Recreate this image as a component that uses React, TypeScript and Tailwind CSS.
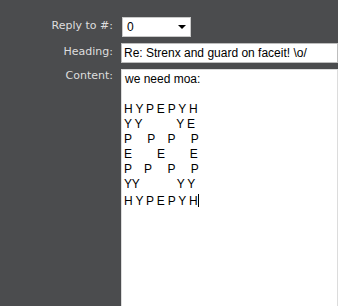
import React from 'react';

const rows = [
  'we need moa:',
  '',
  'H Y P E P Y H',
  'Y Y           Y E',
  'P     P    P     P',
  'E        E        E',
  'P    P     P     P',
  'YY            Y Y',
];

export default function App() {
  return (
    <div className="h-[306px] w-[338px] overflow-hidden bg-[#4b4c4e] pt-[17px]">
      <div className="grid grid-cols-[113px_1fr] gap-x-2 gap-y-[6px] grid-rows-[20px_20px_260px]">
        {/* Reply to */}
        <div className="text-right font-['DejaVu_Sans',sans-serif] text-[11px] leading-[18px] text-[#dedede]">Reply to #:</div>
        <div className="ml-px flex h-5 w-[69px] items-center justify-between border border-[#c9c9c9] bg-white pl-1 pr-[4px] font-['Liberation_Sans',Arial,sans-serif] text-[12px] text-black">
          <span>0</span>
          <svg viewBox="0 0 8 4" className="h-1 w-2">
            <path d="M0 0h8L4 4z" fill="#000" />
          </svg>
        </div>

        {/* Heading */}
        <div className="text-right font-['DejaVu_Sans',sans-serif] text-[11px] leading-[18px] text-[#dedede]">Heading:</div>
        <input
          readOnly
          value="Re: Strenx and guard on faceit! \o/"
          className="h-5 w-full border border-[#bdbdbd] bg-white px-[2px] font-['Liberation_Sans',Arial,sans-serif] text-[12px] text-black outline-none"
        />

        {/* Content */}
        <div className="text-right font-['DejaVu_Sans',sans-serif] text-[11px] leading-[14px] text-[#dedede]">Content:</div>
        <div className="border border-[#dcdcdc] bg-white pl-[3px] pt-[2px] font-['Liberation_Sans',Arial,sans-serif] text-[12px] leading-[15px] text-black">
          {rows.map((r, i) => (
            <div key={i} className={`h-[15px] whitespace-pre ${i > 1 ? 'tracking-[-0.2px] -ml-px' : ''}`}>
              {r}
            </div>
          ))}
          <div className="h-[15px] whitespace-pre tracking-[-0.2px] -ml-px">
            H Y P E P Y H<span className="ml-[1px] inline-block h-[13px] w-px translate-y-[2px] bg-black align-baseline" />
          </div>
        </div>
      </div>
    </div>
  );
}
